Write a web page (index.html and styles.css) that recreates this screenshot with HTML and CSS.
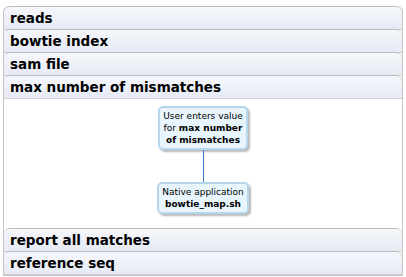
FILE: index.html
```html
<!DOCTYPE html>
<html lang="en">
<head>
  <meta charset="UTF-8" />
  <title>bowtie map</title>
  <link rel="stylesheet" href="styles.css">
</head>
<body>
  <div class="panel">
    <div class="head">reads</div>
    <div class="head">bowtie index</div>
    <div class="head">sam file</div>
    <div class="head">max number of mismatches</div>
    <div class="body">
      <div class="node">User enters value<br>for <b>max number<br>of mismatches</b></div>
      <div class="link"></div>
      <div class="node">Native application<br><b>bowtie_map.sh</b></div>
    </div>
    <div class="head">report all matches</div>
    <div class="head">reference seq</div>
  </div>
</body>
</html>
```

FILE: styles.css
```css
body {
  margin: 0;
  padding: 6px 3px;
  background: #fff;
  font-family: 'DejaVu Sans', sans-serif;
}

.panel {
  border: 1px solid #c4c4c4;
  border-top: none;
  border-radius: 6px 6px 0 0;
}

.head {
  height: 22px;
  line-height: 23px;
  padding-left: 6px;
  font-size: 13.5px;
  font-weight: bold;
  color: #000;
  background: linear-gradient(#f6f7fb, #e6eaf5);
  border-top: 1px solid #bcbcbc;
  border-bottom: 1px solid #d0d0d0;
  border-radius: 6px 6px 0 0;
  margin-top: -1px;
}

.head:first-child {
  margin-top: 0;
}

.body {
  height: 130px;
  display: flex;
  flex-direction: column;
  align-items: center;
  padding-top: 7px;
  box-sizing: border-box;
}

.node {
  background: #e9f5fd;
  border: 2px solid #b5d7ec;
  border-radius: 5px;
  box-shadow: 2px 2px 2px #b8b8b8;
  padding: 2px 3px;
  font-family: 'DejaVu Sans', sans-serif;
  font-size: 9px;
  line-height: 12px;
  color: #000;
  text-align: center;
}

.link {
  width: 1px;
  height: 32px;
  background: #3f7fd0;
}
```
